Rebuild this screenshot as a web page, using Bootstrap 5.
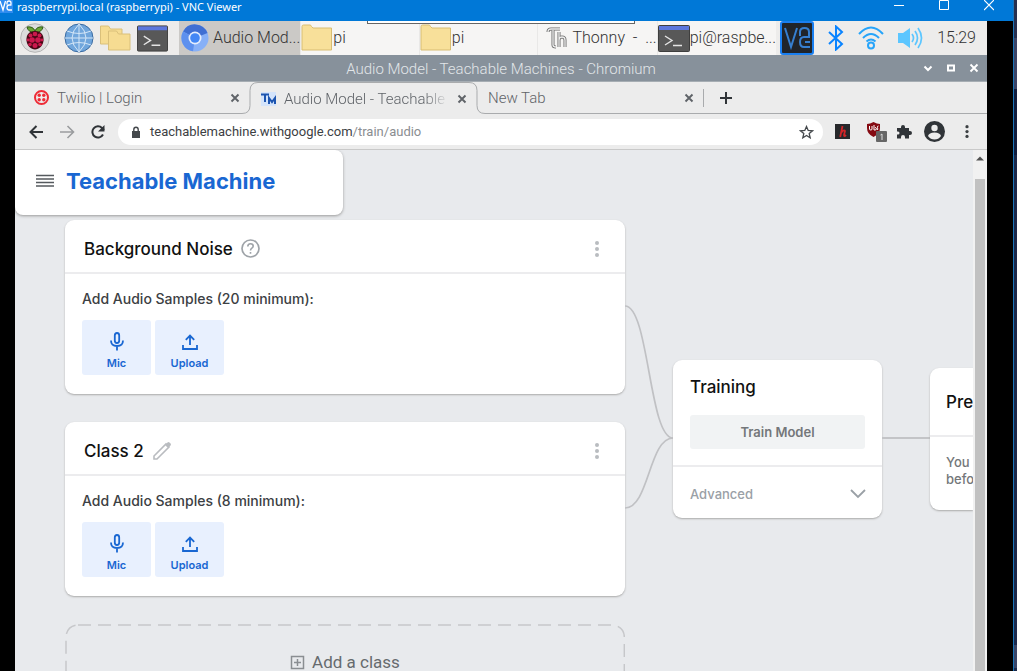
<!DOCTYPE html>
<html lang="en">
<head>
<meta charset="utf-8">
<meta name="viewport" content="width=device-width, initial-scale=1">
<title>raspberrypi.local (raspberrypi) - VNC Viewer</title>
<link rel="stylesheet" href="https://cdn.jsdelivr.net/npm/bootstrap@5.3.0/dist/css/bootstrap.min.css">
<style>
  body { font-family: Roboto, "Liberation Sans", sans-serif; font-size: 16px; line-height: 20px; color: #3c4043; background: #000; }
  svg { display: block; flex: none; }
  button { border: 0; background: none; padding: 0; color: inherit; }
  .min-0 { min-width: 0; min-height: 0; }

  .viewer { border-right: 1px solid #1b74b8; }
  .viewer-bar, .panel, .wm-bar, .tabs, .toolbar { flex-shrink: 0; }
  .behind { width: 3px; background: linear-gradient(#27304f 0 38px, #3b4466 38px 89px, #101c3c 89px 155px, #1a2748 155px 600px, #1c2a4c 600px 645px, #3a4668 645px 668px, #1c2a4c 668px); }
  .viewer-bar { height: 21px; background: #0078d7; color: #fff; font: 11px/13px "Noto Sans", sans-serif; }
  .viewer-logo { width: 13px; height: 13px; background: #2f8cf0; overflow: hidden; }
  .viewer-controls { gap: 35px; padding-right: 19px; }
  .remote { padding: 0 26px 0 15px; }
  .pulltab { left: 367px; top: 21px; width: 268px; height: 3px; background: #fff; border: 1px solid #666; border-top: 0; z-index: 5; }

  .panel { height: 34px; background: #edeceb; color: #333; font-weight: 300; }
  .launchers { width: 164px; padding-left: 5px; gap: 6px; }
  .task { flex: 1 1 0; background: #f6f5f4; border-right: 1px solid #e9e8e7; font-weight: 300; }
  .task.current { background: #cbc9c6; padding-left: 2px; }
  .tray { width: 211px; padding: 0 11px 0 4px; }
  .wm-bar { height: 27px; background: #87919b; color: #e2e6e9; font-size: 15px; font-weight: 300; border-bottom: 1px solid #a6adb3; }
  .wm-controls { right: 8px; top: 8px; gap: 13px; }

  .tabs { height: 32px; background: #ececec; color: #5f6368; font-size: 15px; font-weight: 300; }
  .tab-idle { border-bottom: 1px solid #a9abad; }
  .tab-live { border-top: 1px solid #a9abad; }
  .tab-one { width: 227px; padding: 0 2px 0 19px; }
  .tab-two { width: 211px; padding: 0 2px 0 3px; }
  .tab-three { width: 218px; padding: 0 9px 0 3px; }
  .fade-title { -webkit-mask-image: linear-gradient(90deg, #000 85%, transparent); mask-image: linear-gradient(90deg, #000 85%, transparent); }
  .tab-rule { width: 1px; height: 18px; background: #a9abad; }
  .toolbar { height: 36px; background: #ececec; border-bottom: 1px solid #c9c9c9; padding: 0 14px; }
  .omnibox { height: 26px; border-radius: 13px; background: #fff; padding: 0 9px 0 12px; margin-left: 13px; }
  .addr { font-size: 13px; font-weight: 400; color: #3c4043; text-decoration: none; }
  .addr span { color: #8a8d91; }

  .site { background: #e8eaed; font-family: Inter, "Liberation Sans", sans-serif; }
  .brandbox { width: 328px; height: 65px; background: #fff; border-radius: 0 8px 8px 8px; box-shadow: 0 1px 3px #999; padding: 0 21px 4px; gap: 12px; }
  .brandbox a { font-size: 22px; font-weight: 700; color: #1967d2; text-decoration: none; }
  .board { padding: 5px 0 0 50px; }
  .stack { gap: 28px; }
  .tile { background: #fff; border-radius: 9px; box-shadow: 0 1px 2px #aaa; }
  .tile h2 { font-size: 17px; line-height: 24px; font-weight: 500; color: #111; margin: 0; }
  .tile-head { height: 54px; padding: 5px 24px 0 19px; border-bottom: 2px solid #ececee; }
  .tile-body { height: 120px; padding: 15px 17px 0; font-size: 14px; font-weight: 500; }
  .sample { width: 69px; height: 55px; margin-top: 11px; background: #e8f0fe; border-radius: 3px; color: #1967d2; font-size: 11px; line-height: 14px; font-weight: 600; padding-top: 11px; gap: 5px; }
  .kebab { color: #b9bcc0; }
  .add-box { height: 90px; color: #666a6e; font: 17px/24px Roboto, sans-serif; padding-top: 26px; }
  .add-box button { gap: 7px; }
  .add-frame { inset: 0; }
  .training { width: 209px; margin-top: 140px; height: 158px; }
  .train-top { height: 107px; padding: 15px 17px 0; border-bottom: 2px solid #ececee; }
  .train-btn { height: 34px; margin-top: 16px; background: #f1f3f4; border-radius: 3px; font-size: 13px; font-weight: 600; color: #74777a; }
  .train-more { height: 51px; padding: 3px 16px 0 17px; font-size: 13px; font-weight: 500; color: #9aa0a6; }
  .link-line { width: 48px; height: 2px; margin-top: 217px; background: #c3c4c7; }
  .preview { width: 43px; height: 142px; margin-top: 148px; border-radius: 9px 0 0 9px; overflow: hidden; }
  .preview h2 { padding: 22px 0 0 16px; height: 69px; border-bottom: 2px solid #ececee; }
  .preview p { margin: 0; padding: 17px 0 0 16px; font-size: 13px; line-height: 17px; font-weight: 500; color: #74777a; }
  .scroll { width: 14px; background: #f1f1f1; padding: 6px 2px 0; }
  .scroll-thumb { background: #c1c1c1; margin-top: 18px; }
</style>
</head>
<body class="vh-100 overflow-hidden d-flex">

<svg width="0" height="0" class="position-absolute" aria-hidden="true">
  <symbol id="x" viewBox="0 0 10 10"><path d="M1.500 1.500l7 7m0-7l-7 7" stroke="currentColor" stroke-width="1.900"/></symbol>
  <symbol id="folder" viewBox="0 0 32 28"><path d="M1 2.500q0-1.500 1.500-1.500H9q1 0 1.500 1.500L12 4h18.500v22H1z" fill="#f8e09a" stroke="#d8bd73"/></symbol>
  <symbol id="terminal" viewBox="0 0 32 27"><rect x=".5" y=".5" width="31" height="26" rx="1" fill="#585858" stroke="#3e3e3e"/><path d="M1 1h30v4H1z" fill="#5c77dd"/><path d="M7 11l7 4.500-7 4.500M15 20.500h9" fill="none" stroke="#e5e5e5" stroke-width="1.400"/></symbol>
  <symbol id="dots" viewBox="0 0 4 16"><g fill="currentColor"><circle cx="2" cy="2" r="2"/><circle cx="2" cy="8" r="2"/><circle cx="2" cy="14" r="2"/></g></symbol>
  <symbol id="mic" viewBox="0 0 16 20"><path d="M8 2q2.200 0 2.200 2.500v5q0 2.500-2.200 2.500t-2.200-2.500v-5Q5.800 2 8 2zM2 9.500q0 5.500 6 5.500t6-5.500M8 15v4.500" fill="none" stroke="currentColor" stroke-width="1.800"/></symbol>
  <symbol id="upload" viewBox="0 0 16 20"><path d="M8 14V5M3.800 8.800L8 4.600l4.200 4.200M1 14v4h14v-4" fill="none" stroke="currentColor" stroke-width="1.800"/></symbol>
</svg>

<main class="viewer flex-grow-1 d-flex flex-column min-0 position-relative">
  <header class="viewer-bar d-flex align-items-start">
    <svg class="viewer-logo" viewBox="0 0 13 13"><path d="M0 1l3 9 2.500-9M7 4.500V3q0-2 2-2t2 2v1.500M11.500 5H9Q7 5 7 7.500T9 10h3" fill="none" stroke="#fff" stroke-width="1.300"/></svg>
    <div class="ms-1 flex-grow-1">raspberrypi.local (raspberrypi) - VNC Viewer</div>
    <div class="viewer-controls d-flex">
      <button aria-label="Minimise"><svg width="10" height="11"><path d="M0 5.500h10" stroke="#fff"/></svg></button>
      <button aria-label="Maximise"><svg width="10" height="11"><path d="M.5 .5h9v9h-9z" fill="none" stroke="#fff"/></svg></button>
      <button aria-label="Close"><svg width="10" height="11"><path d="M0 0l10 10M10 0L0 10" stroke="#fff" stroke-width="1.200"/></svg></button>
    </div>
  </header>
  <div class="pulltab position-absolute"></div>

  <div class="remote flex-grow-1 d-flex flex-column min-0">
    <nav class="panel d-flex" aria-label="Taskbar">
      <div class="launchers d-flex align-items-center">
        <button aria-label="Menu"><svg width="30" height="30" viewBox="0 0 30 30"><circle cx="15" cy="15" r="14.300" fill="#dcdcdc" stroke="#b5b5b5"/><path d="M15 8q-2-5-8-4 1 5 7 5.500zM15 8q2-5 8-4-1 5-7 5.500z" fill="#6aa636" stroke="#335a1b"/><path d="M15 8c6 0 9 4 8.500 9.500C23 23 19 26.500 15 26.500S7 23 6.500 17.500C6 12 9 8 15 8z" fill="#460715"/><g fill="#cb184d"><circle cx="15" cy="11" r="2.300"/><circle cx="10.500" cy="12.500" r="2"/><circle cx="19.500" cy="12.500" r="2"/><circle cx="12" cy="17" r="2.800"/><circle cx="18" cy="17" r="2.800"/><circle cx="8" cy="17" r="1.400"/><circle cx="22" cy="17" r="1.400"/><circle cx="10" cy="21.500" r="1.800"/><circle cx="20" cy="21.500" r="1.800"/><circle cx="15" cy="22.500" r="2.500"/></g></svg></button>
        <button class="ms-1 ps-1" aria-label="Web browser"><svg width="30" height="30" viewBox="0 0 30 30"><circle cx="15" cy="15" r="14" fill="#70a6dc" stroke="#3c6ca2"/><path d="M15 1v28M1 15h28M3 8q12 5 24 0M3 22q12-5 24 0M15 1Q1 15 15 29M15 1q14 14 0 28" fill="none" stroke="#d4e6f7"/></svg></button>
        <button aria-label="File manager"><svg width="31" height="26" viewBox="0 0 31 26"><g fill="#f6dc92" stroke="#dac07a"><path d="M.5 1h8l2 3H22v15H.5z"/><path d="M8.500 6h8l2 3H30v16H8.500z"/></g></svg></button>
        <button aria-label="Terminal"><svg width="31" height="27"><use href="#terminal"/></svg></button>
      </div>
      <div class="flex-grow-1 d-flex min-0">
        <button class="task current d-flex align-items-center text-nowrap"><svg class="me-1" width="28" height="28" viewBox="0 0 28 28"><circle cx="14" cy="14" r="13.500" fill="#87b0f7"/><path d="M14 14L2 7.500A13.500 13.500 0 0 1 26.500 9z" fill="#3f6fd3"/><path d="M14 14L2 7.500A13.500 13.500 0 0 0 12 27.300z" fill="#5d90ee"/><circle cx="14" cy="14" r="6.500" fill="#e4edfd"/><circle cx="14" cy="14" r="4.800" fill="#4387f5"/></svg>Audio Mod...</button>
        <button class="task d-flex align-items-center"><svg width="32" height="28"><use href="#folder"/></svg>pi</button>
        <button class="task d-flex align-items-center"><svg width="32" height="28"><use href="#folder"/></svg>pi</button>
        <button class="task d-flex align-items-center text-nowrap"><svg class="ms-2 me-1" width="22" height="22" viewBox="0 0 22 22"><path d="M2 5q0-3 3-3h9M7 3v15q0 2 3 2M13 5v15M13 13q0-3 3-3t3 3v7" fill="none" stroke="#6d6d6d" stroke-width="3"/><path d="M2 5q0-3 3-3h9M7 3v15q0 2 3 2M13 5v15M13 13q0-3 3-3t3 3v7" fill="none" stroke="#eee" stroke-width="1.300"/></svg>Thonny&nbsp; - &nbsp;...</button>
        <button class="task d-flex align-items-center text-nowrap border-end-0"><svg width="32" height="27"><use href="#terminal"/></svg>pi@raspbe...</button>
      </div>
      <div class="tray d-flex align-items-center justify-content-between">
        <svg width="34" height="34" viewBox="0 0 34 34"><rect x="1" y="1" width="32" height="32" rx="2" fill="#20242a" stroke="#1a7ff0" stroke-width="2"/><path d="M5 7l6 19 6-19M20 15v-4q0-4 4.500-4t4.500 4v4M30 16h-6q-4 0-4 5t4 5h6M25 21h5" fill="none" stroke="#367fd0" stroke-width="2"/></svg>
        <svg width="16" height="26" viewBox="0 0 16 26"><path d="M1 7l13 12-6 5.500v-23L14 7 1 19" fill="none" stroke="#0a84ff" stroke-width="2"/></svg>
        <svg width="26" height="24" viewBox="0 0 26 24"><g fill="none" stroke="#26a4fa" stroke-width="2"><path d="M1 8q12-13 24 0M5 12q8-8 16 0M8.500 15.500q4.500-4 9 0"/><circle cx="13" cy="19.500" r="3"/></g></svg>
        <svg width="26" height="22" viewBox="0 0 26 22"><path d="M1 6h5l7-5v20l-7-5H1z" fill="#5cc6ff"/><path d="M15 7q3 4 0 8M18 4q5 7 0 14M21 1q7 10 0 20" fill="none" stroke="#5cc6ff" stroke-width="1.700"/></svg>
        <span>15:29</span>
      </div>
    </nav>

    <div class="wm-bar text-center position-relative pt-1">Audio Model - Teachable Machines - Chromium
      <div class="wm-controls position-absolute d-flex">
        <button aria-label="Iconify"><svg width="10" height="10"><path d="M1.500 3.500L5 7l3.500-3.500" fill="none" stroke="#fff" stroke-width="2"/></svg></button>
        <button aria-label="Maximise window"><svg width="10" height="10"><path d="M2 2.500h6v5H2z" fill="none" stroke="#fff" stroke-width="2"/></svg></button>
        <button aria-label="Close window" class="text-white"><svg width="10" height="10"><use href="#x"/></svg></button>
      </div>
    </div>

    <div class="tabs d-flex">
      <div class="tab-idle tab-one d-flex align-items-center">
        <svg class="me-2" width="15" height="15" viewBox="0 0 15 15"><circle cx="7.500" cy="7.500" r="6.500" fill="none" stroke="#ee2b36" stroke-width="2"/><g fill="#ee2b36"><circle cx="5.200" cy="5.200" r="1.700"/><circle cx="9.800" cy="5.200" r="1.700"/><circle cx="5.200" cy="9.800" r="1.700"/><circle cx="9.800" cy="9.800" r="1.700"/></g></svg>
        <span class="flex-grow-1">Twilio | Login</span>
        <button aria-label="Close tab"><svg width="10" height="10"><use href="#x"/></svg></button>
      </div>
      <svg width="16" height="32"><path d="M0 31.500q8 0 8-8v-15q0-8 8-8" fill="none" stroke="#a9abad"/></svg>
      <div class="tab-live tab-two d-flex align-items-center">
        <svg class="me-2" width="15" height="14" viewBox="0 0 15 14"><path d="M0 0h15v14H0z" fill="#d4e4fb"/><path d="M0 2.500h8M4 2v8M8 12V6l3 4 3-4v6" fill="none" stroke="#1d55b0" stroke-width="2"/></svg>
        <span class="fade-title flex-grow-1 text-nowrap">Audio Model - Teachable</span>
        <button class="ms-2" aria-label="Close tab"><svg width="10" height="10"><use href="#x"/></svg></button>
      </div>
      <svg width="16" height="32"><path d="M0 .5q8 0 8 8v15q0 8 8 8" fill="none" stroke="#a9abad"/></svg>
      <div class="tab-idle tab-three d-flex align-items-center">
        <span class="flex-grow-1">New Tab</span>
        <button aria-label="Close tab"><svg width="10" height="10"><use href="#x"/></svg></button>
      </div>
      <div class="tab-idle flex-grow-1 d-flex align-items-center">
        <div class="tab-rule"></div>
        <button class="ms-3" aria-label="New tab"><svg width="12" height="12"><path d="M6 0v12M0 6h12" stroke="#303438" stroke-width="2"/></svg></button>
      </div>
    </div>

    <div class="toolbar d-flex align-items-center">
      <div class="d-flex gap-3">
        <button aria-label="Back"><svg width="15" height="14"><path d="M14 7H2M7.500 1L1.500 7l6 6" fill="none" stroke="#303438" stroke-width="2"/></svg></button>
        <button aria-label="Forward"><svg width="15" height="14"><path d="M0 7h13M7.500 1l6 6-6 6" fill="none" stroke="#9a9c9e" stroke-width="1.600"/></svg></button>
        <button aria-label="Reload"><svg width="14" height="14"><path d="M12 9.500A5.600 5.600 0 1 1 11 3L13 5" fill="none" stroke="#303438" stroke-width="2"/><path d="M13.500 0v6.500H7z" fill="#303438"/></svg></button>
      </div>
      <div class="omnibox flex-grow-1 d-flex align-items-center">
        <svg class="me-2" width="12" height="12" viewBox="0 0 12 12"><path d="M2 5h8v7H2z" fill="#44484c"/><path d="M3.800 6V3.500a2.200 2.200 0 0 1 4.400 0V6" fill="none" stroke="#44484c" stroke-width="1.400"/></svg>
        <a class="addr flex-grow-1" href="#">teachablemachine.withgoogle.com<span>/train/audio</span></a>
        <button aria-label="Bookmark"><svg width="15" height="14" viewBox="0 0 15 14"><path d="M7.500 1.500l1.700 4 4.300.3-3.300 2.800 1 4.200-3.700-2.300-3.700 2.300 1-4.200-3.300-2.800 4.300-.3z" fill="none" stroke="#44484c" stroke-width="1.300"/></svg></button>
      </div>
      <button class="ms-2 ps-1" aria-label="Honey"><svg width="15" height="15"><path d="M0 0h15v15H0z" fill="#27282b"/><path d="M7.500 2L5.200 13M6 9q3-4 4-2l-1 4q0 2 2 0" fill="none" stroke="#d12528" stroke-width="1.800"/></svg></button>
      <button class="ms-3" aria-label="uBlock Origin, 1 blocked"><svg width="22" height="21" viewBox="0 0 22 21"><path d="M7.500 1Q11 3 14 3v4q0 6-6.500 9Q1 13 1 7V3q3 0 6.500-2z" fill="#850a12"/><path d="M3.500 5v3q0 1 1.300 1T6 8V5M8 4v5h1q1.500 0 1.500-1.200T9 6.500M12.500 5q-1.500 0-1 1.500t0 2.500" fill="none" stroke="#fff"/><rect x="10" y="10" width="11" height="11" rx="1" fill="#666"/><path d="M14.500 14l1.500-1v6" fill="none" stroke="#ddd"/></svg></button>
      <button class="ms-2" aria-label="Extensions"><svg width="16" height="15" viewBox="0 0 16 15"><path d="M1 4h4V3a2 2 0 0 1 4 0v1h4v3h1a2 2 0 0 1 0 4h-1v3.500H9V13a2 2 0 0 0-4 0v1.500H1V10.500h1a1.500 1.500 0 0 0 0-3H1z" fill="#303438"/></svg></button>
      <button class="ms-2 ps-1" aria-label="Profile"><svg width="21" height="21" viewBox="0 0 21 21"><circle cx="10.500" cy="10.500" r="10.500" fill="#303438"/><circle cx="10.500" cy="7" r="3.200" fill="#ececec"/><path d="M4 15q1-3.500 6.500-3.500T17 15q-2.500 3.500-6.500 3.500T4 15z" fill="#ececec"/></svg></button>
      <button class="ms-3 px-1" aria-label="Browser menu"><svg width="4" height="13"><use href="#dots"/></svg></button>
    </div>

    <div class="flex-grow-1 d-flex min-0">
      <div class="site flex-grow-1 min-0 overflow-hidden">
        <div class="brandbox d-flex align-items-center">
          <button aria-label="Open menu"><svg width="18" height="13"><path d="M0 1.500h18M0 5h18M0 8.500h18M0 12h18" stroke="#555a5e" stroke-width="1.500"/></svg></button>
          <a href="#">Teachable Machine</a>
        </div>
        <div class="board d-flex align-items-start">
          <div class="stack flex-grow-1 d-flex flex-column">
            <section class="tile">
              <div class="tile-head d-flex align-items-center">
                <h2>Background Noise</h2>
                <button class="ms-2" aria-label="Help"><svg width="19" height="19" viewBox="0 0 19 19"><circle cx="9.500" cy="9.500" r="8.500" fill="none" stroke="#9ea3a8" stroke-width="1.700"/><path d="M6.800 7.500q0-2.800 2.700-2.800t2.700 2.400q0 1.200-1.300 2T9.500 11.500M9.500 13v1.700" fill="none" stroke="#9ea3a8" stroke-width="1.600"/></svg></button>
                <button class="kebab ms-auto" aria-label="Class options"><svg width="8" height="16"><use href="#dots"/></svg></button>
              </div>
              <div class="tile-body">
                <div>Add Audio Samples (20 minimum):</div>
                <div class="d-flex gap-1">
                  <button class="sample d-flex flex-column align-items-center"><svg width="16" height="20"><use href="#mic"/></svg>Mic</button>
                  <button class="sample d-flex flex-column align-items-center"><svg width="16" height="20"><use href="#upload"/></svg>Upload</button>
                </div>
              </div>
            </section>
            <section class="tile">
              <div class="tile-head d-flex align-items-center">
                <h2>Class 2</h2>
                <button class="ms-2" aria-label="Rename class"><svg width="20" height="20" viewBox="0 0 20 20"><path d="M2 18v-3L14 3l3 3L5 18z" fill="none" stroke="#b9bcc0" stroke-width="1.600"/><path d="M13 4l2.500-2.500q1-1 2 0l1 1q1 1 0 2L16 7z" fill="#b9bcc0"/></svg></button>
                <button class="kebab ms-auto" aria-label="Class options"><svg width="8" height="16"><use href="#dots"/></svg></button>
              </div>
              <div class="tile-body">
                <div>Add Audio Samples (8 minimum):</div>
                <div class="d-flex gap-1">
                  <button class="sample d-flex flex-column align-items-center"><svg width="16" height="20"><use href="#mic"/></svg>Mic</button>
                  <button class="sample d-flex flex-column align-items-center"><svg width="16" height="20"><use href="#upload"/></svg>Upload</button>
                </div>
              </div>
            </section>
            <div class="add-box position-relative d-flex justify-content-center align-items-start">
              <svg class="add-frame position-absolute" width="100%" height="90"><rect x="1" y="1" width="99.700%" height="120" rx="12" fill="none" stroke="#c6c7ca" stroke-width="1.500" stroke-dasharray="13 7"/></svg>
              <button class="d-flex align-items-center position-relative"><svg width="15" height="15"><path d="M1.500 1.500h12v12h-12zM7.500 4v7M4 7.500h7" fill="none" stroke="#8a8e92" stroke-width="1.500"/></svg>Add a class</button>
            </div>
          </div>
          <svg width="48" height="300"><path d="M0 86C24 86 24 218 48 218M0 288C24 288 24 218 48 218" fill="none" stroke="#c0c1c4" stroke-width="1.700"/></svg>
          <section class="tile training flex-shrink-0">
            <div class="train-top">
              <h2>Training</h2>
              <button class="train-btn w-100">Train Model</button>
            </div>
            <button class="train-more w-100 d-flex align-items-center justify-content-between">Advanced
              <svg width="16" height="10"><path d="M1 1l7 7 7-7" fill="none" stroke="#9aa0a6" stroke-width="1.800"/></svg>
            </button>
          </section>
          <div class="link-line flex-shrink-0"></div>
          <section class="tile preview flex-shrink-0">
            <h2>Pre</h2>
            <p>You<br>befo</p>
          </section>
        </div>
      </div>
      <div class="scroll d-flex flex-column" aria-hidden="true">
        <svg width="10" height="5"><path d="M1 4.500l4-4 4 4z" fill="#505050"/></svg>
        <div class="scroll-thumb flex-grow-1"></div>
      </div>
    </div>
  </div>
</main>
<aside class="behind" aria-hidden="true"></aside>

<script src="https://cdn.jsdelivr.net/npm/bootstrap@5.3.0/dist/js/bootstrap.bundle.min.js"></script>
</body>
</html>
